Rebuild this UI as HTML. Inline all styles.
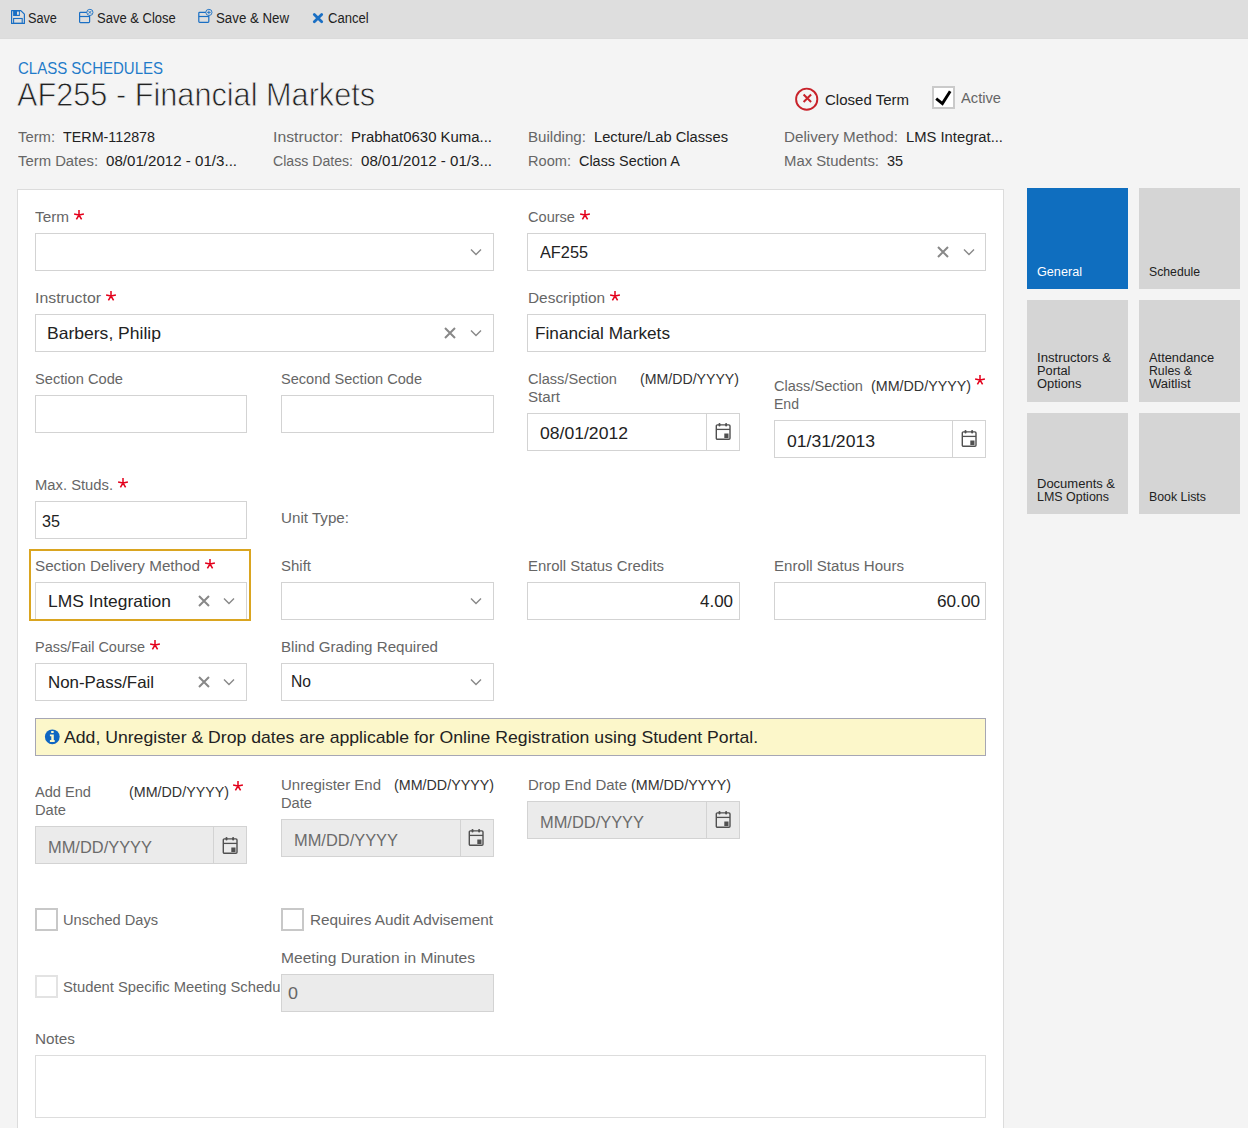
<!DOCTYPE html>
<html><head><meta charset="utf-8">
<style>
*{margin:0;padding:0;box-sizing:border-box}
html,body{width:1248px;height:1128px;overflow:hidden;background:#f4f4f4;font-family:"Liberation Sans",sans-serif;position:relative}
.a{position:absolute;white-space:nowrap;transform-origin:0 0}
svg.a{overflow:visible}
</style></head><body>
<div class="a" style="left:0;top:0;width:1248px;height:38px;background:#dedede"></div>
<div class="a" style="left:0;top:38px;width:1248px;height:1px;background:#dbdbdb"></div>
<svg class="a" style="left:11px;top:10px" width="14" height="14" viewBox="0 0 14 14"><path d="M0.6 0.6H9.8L13.4 4.2V13.4H0.6Z" fill="none" stroke="#1a6fc4" stroke-width="1.2" stroke-linejoin="round"/><rect x="2.1" y="0.6" width="6.8" height="5.4" fill="#1a6fc4"/><rect x="6" y="1.6" width="1.9" height="3.2" fill="#dedede"/><rect x="2.6" y="8.5" width="8.6" height="4.9" fill="none" stroke="#1a6fc4" stroke-width="1.1"/></svg>
<div class="a" style="left:28.00px;top:11px;font-size:14px;line-height:14px;color:#222222;transform:scaleX(0.9062);">Save</div>
<svg class="a" style="left:78px;top:7px" width="17" height="17" viewBox="0 0 17 17"><rect x="1.6" y="5.4" width="10" height="10.2" rx="0.8" fill="none" stroke="#1a6fc4" stroke-width="1.2"/><line x1="1.6" y1="9.5" x2="11.6" y2="9.5" stroke="#1a6fc4" stroke-width="1.2"/><circle cx="11.9" cy="5.4" r="3.1" fill="#dedede" stroke="#1a6fc4" stroke-width="0.9"/><path d="M10.6 4.1l2.6 2.6M13.2 4.1l-2.6 2.6" stroke="#1a6fc4" stroke-width="0.9"/></svg>
<div class="a" style="left:97.00px;top:11px;font-size:14px;line-height:14px;color:#222222;transform:scaleX(0.9294);">Save &amp; Close</div>
<svg class="a" style="left:197px;top:7px" width="17" height="17" viewBox="0 0 17 17"><rect x="1.8" y="5.4" width="10" height="10" rx="0.8" fill="none" stroke="#1a6fc4" stroke-width="1.2"/><line x1="1.8" y1="9.5" x2="11.8" y2="9.5" stroke="#1a6fc4" stroke-width="1.2"/><circle cx="11.9" cy="5.4" r="3.1" fill="#dedede" stroke="#1a6fc4" stroke-width="0.9"/><path d="M11.9 3.6v3.6M10.1 5.4h3.6" stroke="#1a6fc4" stroke-width="0.9"/></svg>
<div class="a" style="left:216.00px;top:11px;font-size:14px;line-height:14px;color:#222222;transform:scaleX(0.9487);">Save &amp; New</div>
<svg class="a" style="left:312px;top:12px" width="12" height="12" viewBox="0 0 12 12"><path d="M2.3 2.4l7.4 7.4M9.7 2.4l-7.4 7.4" stroke="#1a6fc4" stroke-width="2.8" stroke-linecap="round"/></svg>
<div class="a" style="left:328.00px;top:11px;font-size:14px;line-height:14px;color:#222222;transform:scaleX(0.9318);">Cancel</div>
<div class="a" style="left:18.00px;top:60px;font-size:16.5px;line-height:16.5px;color:#1f7bc9;transform:scaleX(0.9091);">CLASS SCHEDULES</div>
<div class="a" style="left:17.00px;top:78px;font-size:33px;line-height:33px;color:#222222;transform:scaleX(0.9299);-webkit-text-stroke:0.8px #f4f4f4;">AF255 - Financial Markets</div>
<svg class="a" style="left:795px;top:87px" width="25" height="25" viewBox="0 0 25 25"><circle cx="11.7" cy="12.2" r="10.6" fill="none" stroke="#c8222a" stroke-width="1.9"/><path d="M8.6 7.5L16.1 15M16.1 7.5L8.6 15" stroke="#c8222a" stroke-width="2"/></svg>
<div class="a" style="left:825.00px;top:92px;font-size:15.5px;line-height:15.5px;color:#222222;transform:scaleX(0.9689);">Closed Term</div>
<div class="a" style="left:932px;top:86px;width:23px;height:23px;background:#fff;border:2px solid #cacaca;"></div>
<svg class="a" style="left:933px;top:87px" width="21" height="21" viewBox="0 0 21 21"><path d="M3.2 11.6L9.4 16.6L17.2 4.2" fill="none" stroke="#000" stroke-width="2.9" stroke-linejoin="miter"/></svg>
<div class="a" style="left:961.00px;top:90px;font-size:15.5px;line-height:15.5px;color:#666666;transform:scaleX(0.9479);">Active</div>
<div class="a" style="left:18.00px;top:129px;font-size:15.5px;line-height:15.5px;color:#666666;transform:scaleX(0.9561);">Term:</div>
<div class="a" style="left:63.00px;top:129px;font-size:15.5px;line-height:15.5px;color:#222222;transform:scaleX(0.9237);">TERM-112878</div>
<div class="a" style="left:18.00px;top:153px;font-size:15.5px;line-height:15.5px;color:#666666;transform:scaleX(0.9581);">Term Dates:</div>
<div class="a" style="left:106.00px;top:153px;font-size:15.5px;line-height:15.5px;color:#222222;transform:scaleX(0.9747);">08/01/2012 - 01/3...</div>
<div class="a" style="left:273.00px;top:129px;font-size:15.5px;line-height:15.5px;color:#666666;transform:scaleX(1.0160);">Instructor:</div>
<div class="a" style="left:351.00px;top:129px;font-size:15.5px;line-height:15.5px;color:#222222;transform:scaleX(0.9625);">Prabhat0630 Kuma...</div>
<div class="a" style="left:273.00px;top:153px;font-size:15.5px;line-height:15.5px;color:#666666;transform:scaleX(0.9101);">Class Dates:</div>
<div class="a" style="left:361.00px;top:153px;font-size:15.5px;line-height:15.5px;color:#222222;transform:scaleX(0.9747);">08/01/2012 - 01/3...</div>
<div class="a" style="left:528.00px;top:129px;font-size:15.5px;line-height:15.5px;color:#666666;transform:scaleX(0.9748);">Building:</div>
<div class="a" style="left:594.00px;top:129px;font-size:15.5px;line-height:15.5px;color:#222222;transform:scaleX(0.9483);">Lecture/Lab Classes</div>
<div class="a" style="left:528.00px;top:153px;font-size:15.5px;line-height:15.5px;color:#666666;transform:scaleX(0.9409);">Room:</div>
<div class="a" style="left:579.00px;top:153px;font-size:15.5px;line-height:15.5px;color:#222222;transform:scaleX(0.9300);">Class Section A</div>
<div class="a" style="left:784.00px;top:129px;font-size:15.5px;line-height:15.5px;color:#666666;transform:scaleX(0.9802);">Delivery Method:</div>
<div class="a" style="left:906.00px;top:129px;font-size:15.5px;line-height:15.5px;color:#222222;transform:scaleX(0.9538);">LMS Integrat...</div>
<div class="a" style="left:784.00px;top:153px;font-size:15.5px;line-height:15.5px;color:#666666;transform:scaleX(0.9586);">Max Students:</div>
<div class="a" style="left:887.00px;top:153px;font-size:15.5px;line-height:15.5px;color:#222222;transform:scaleX(0.9302);">35</div>
<div class="a" style="left:1027px;top:188px;width:101px;height:101px;background:#0f6ebf"></div>
<div class="a" style="left:1037.00px;top:266px;font-size:12.5px;line-height:12.5px;color:#fff;transform:scaleX(1.0112);">General</div>
<div class="a" style="left:1139px;top:188px;width:101px;height:101px;background:#d5d5d5"></div>
<div class="a" style="left:1149.00px;top:266px;font-size:12.5px;line-height:12.5px;color:#222222;transform:scaleX(0.9789);">Schedule</div>
<div class="a" style="left:1027px;top:300px;width:101px;height:102px;background:#d5d5d5"></div>
<div class="a" style="left:1037.00px;top:352px;font-size:12.5px;line-height:12.5px;color:#222222;transform:scaleX(1.0541);">Instructors &amp;</div>
<div class="a" style="left:1037.00px;top:365px;font-size:12.5px;line-height:12.5px;color:#222222;transform:scaleX(1.0245);">Portal</div>
<div class="a" style="left:1037.00px;top:378px;font-size:12.5px;line-height:12.5px;color:#222222;transform:scaleX(1.0325);">Options</div>
<div class="a" style="left:1139px;top:300px;width:101px;height:102px;background:#d5d5d5"></div>
<div class="a" style="left:1149.00px;top:352px;font-size:12.5px;line-height:12.5px;color:#222222;transform:scaleX(1.0285);">Attendance</div>
<div class="a" style="left:1149.00px;top:365px;font-size:12.5px;line-height:12.5px;color:#222222;transform:scaleX(0.9817);">Rules &amp;</div>
<div class="a" style="left:1149.00px;top:378px;font-size:12.5px;line-height:12.5px;color:#222222;transform:scaleX(1.0427);">Waitlist</div>
<div class="a" style="left:1027px;top:413px;width:101px;height:101px;background:#d5d5d5"></div>
<div class="a" style="left:1037.00px;top:478px;font-size:12.5px;line-height:12.5px;color:#222222;transform:scaleX(1.0400);">Documents &amp;</div>
<div class="a" style="left:1037.00px;top:491px;font-size:12.5px;line-height:12.5px;color:#222222;transform:scaleX(0.9959);">LMS Options</div>
<div class="a" style="left:1139px;top:413px;width:101px;height:101px;background:#d5d5d5"></div>
<div class="a" style="left:1149.00px;top:491px;font-size:12.5px;line-height:12.5px;color:#222222;transform:scaleX(0.9879);">Book Lists</div>
<div class="a" style="left:17px;top:189px;width:987px;height:1000px;background:#fff;border:1px solid #dcdcdc"></div>
<div class="a" style="left:35.00px;top:209px;font-size:15.5px;line-height:15.5px;color:#666666;transform:scaleX(0.9884);">Term</div>
<svg class="a" style="left:73px;top:208.5px" width="12" height="12" viewBox="-6 -6 12 12"><path d="M0 0V-5M0 0L4.89 -1.04M0 0L2.6 4.4M0 0L-2.6 4.4M0 0L-4.89 -1.04" stroke="#e3001b" stroke-width="1.5" stroke-linecap="butt"/></svg>
<div class="a" style="left:35px;top:233px;width:459px;height:38px;background:#fff;border:1px solid #d3d3d3;"></div>
<svg class="a" style="left:470px;top:248px" width="12" height="8" viewBox="0 0 12 8"><path d="M1 1.5l5 5 5-5" fill="none" stroke="#888888" stroke-width="1.4"/></svg>
<div class="a" style="left:528.00px;top:209px;font-size:15.5px;line-height:15.5px;color:#666666;transform:scaleX(0.9400);">Course</div>
<svg class="a" style="left:579px;top:208.5px" width="12" height="12" viewBox="-6 -6 12 12"><path d="M0 0V-5M0 0L4.89 -1.04M0 0L2.6 4.4M0 0L-2.6 4.4M0 0L-4.89 -1.04" stroke="#e3001b" stroke-width="1.5" stroke-linecap="butt"/></svg>
<div class="a" style="left:527px;top:233px;width:459px;height:38px;background:#fff;border:1px solid #d3d3d3;"></div>
<svg class="a" style="left:937px;top:246px" width="12" height="12" viewBox="0 0 12 12"><path d="M1 1l10 10M11 1L1 11" fill="none" stroke="#888888" stroke-width="2"/></svg>
<svg class="a" style="left:963px;top:248px" width="12" height="8" viewBox="0 0 12 8"><path d="M1 1.5l5 5 5-5" fill="none" stroke="#888888" stroke-width="1.4"/></svg>
<div class="a" style="left:540.00px;top:244px;font-size:16.5px;line-height:16.5px;color:#222222;transform:scaleX(0.9877);">AF255</div>
<div class="a" style="left:35.00px;top:290px;font-size:15.5px;line-height:15.5px;color:#666666;transform:scaleX(1.0217);">Instructor</div>
<svg class="a" style="left:105px;top:289.5px" width="12" height="12" viewBox="-6 -6 12 12"><path d="M0 0V-5M0 0L4.89 -1.04M0 0L2.6 4.4M0 0L-2.6 4.4M0 0L-4.89 -1.04" stroke="#e3001b" stroke-width="1.5" stroke-linecap="butt"/></svg>
<div class="a" style="left:35px;top:314px;width:459px;height:38px;background:#fff;border:1px solid #d3d3d3;"></div>
<svg class="a" style="left:444px;top:327px" width="12" height="12" viewBox="0 0 12 12"><path d="M1 1l10 10M11 1L1 11" fill="none" stroke="#888888" stroke-width="2"/></svg>
<svg class="a" style="left:470px;top:329px" width="12" height="8" viewBox="0 0 12 8"><path d="M1 1.5l5 5 5-5" fill="none" stroke="#888888" stroke-width="1.4"/></svg>
<div class="a" style="left:47.00px;top:325px;font-size:16.5px;line-height:16.5px;color:#222222;transform:scaleX(1.0624);">Barbers, Philip</div>
<div class="a" style="left:528.00px;top:290px;font-size:15.5px;line-height:15.5px;color:#666666;transform:scaleX(0.9935);">Description</div>
<svg class="a" style="left:609px;top:289.5px" width="12" height="12" viewBox="-6 -6 12 12"><path d="M0 0V-5M0 0L4.89 -1.04M0 0L2.6 4.4M0 0L-2.6 4.4M0 0L-4.89 -1.04" stroke="#e3001b" stroke-width="1.5" stroke-linecap="butt"/></svg>
<div class="a" style="left:527px;top:314px;width:459px;height:38px;background:#fff;border:1px solid #d3d3d3;"></div>
<div class="a" style="left:535.00px;top:325px;font-size:16.5px;line-height:16.5px;color:#222222;transform:scaleX(1.0441);">Financial Markets</div>
<div class="a" style="left:35.00px;top:371px;font-size:15.5px;line-height:15.5px;color:#666666;transform:scaleX(0.9452);">Section Code</div>
<div class="a" style="left:35px;top:395px;width:212px;height:38px;background:#fff;border:1px solid #d3d3d3;"></div>
<div class="a" style="left:281.00px;top:371px;font-size:15.5px;line-height:15.5px;color:#666666;transform:scaleX(0.9406);">Second Section Code</div>
<div class="a" style="left:281px;top:395px;width:213px;height:38px;background:#fff;border:1px solid #d3d3d3;"></div>
<div class="a" style="left:528.00px;top:371px;font-size:15.5px;line-height:15.5px;color:#666666;transform:scaleX(0.9388);">Class/Section</div>
<div class="a" style="left:528.00px;top:389px;font-size:15.5px;line-height:15.5px;color:#666666;transform:scaleX(0.9786);">Start</div>
<div class="a" style="left:640.00px;top:371px;font-size:15px;line-height:15px;color:#333;transform:scaleX(0.9429);">(MM/DD/YYYY)</div>
<div class="a" style="left:527px;top:413px;width:213px;height:38px;background:#fff;border:1px solid #d3d3d3;"></div>
<div class="a" style="left:706px;top:414px;width:1px;height:36px;background:#d3d3d3"></div>
<svg class="a" style="left:715px;top:423px" width="17" height="17" viewBox="0 0 17 17"><rect x="1.3" y="1.9" width="13.7" height="14.4" rx="1.1" fill="none" stroke="#505050" stroke-width="1.4"/><line x1="1.3" y1="6.4" x2="15" y2="6.4" stroke="#505050" stroke-width="1.3"/><rect x="3.5" y="0.1" width="2" height="3.4" rx="1" fill="#505050"/><rect x="10.1" y="0.1" width="2" height="3.4" rx="1" fill="#505050"/><rect x="9.3" y="10.5" width="4.2" height="4.5" fill="#505050"/></svg>
<div class="a" style="left:540.00px;top:425px;font-size:16.5px;line-height:16.5px;color:#222222;transform:scaleX(1.0654);">08/01/2012</div>
<div class="a" style="left:774.00px;top:378px;font-size:15.5px;line-height:15.5px;color:#666666;transform:scaleX(0.9388);">Class/Section</div>
<div class="a" style="left:774.00px;top:396px;font-size:15.5px;line-height:15.5px;color:#666666;transform:scaleX(0.9058);">End</div>
<div class="a" style="left:871.00px;top:378px;font-size:15px;line-height:15px;color:#333;transform:scaleX(0.9524);">(MM/DD/YYYY)</div>
<svg class="a" style="left:974px;top:374px" width="12" height="12" viewBox="-6 -6 12 12"><path d="M0 0V-5M0 0L4.89 -1.04M0 0L2.6 4.4M0 0L-2.6 4.4M0 0L-4.89 -1.04" stroke="#e3001b" stroke-width="1.5" stroke-linecap="butt"/></svg>
<div class="a" style="left:774px;top:420px;width:212px;height:38px;background:#fff;border:1px solid #d3d3d3;"></div>
<div class="a" style="left:952px;top:421px;width:1px;height:36px;background:#d3d3d3"></div>
<svg class="a" style="left:961px;top:430px" width="17" height="17" viewBox="0 0 17 17"><rect x="1.3" y="1.9" width="13.7" height="14.4" rx="1.1" fill="none" stroke="#505050" stroke-width="1.4"/><line x1="1.3" y1="6.4" x2="15" y2="6.4" stroke="#505050" stroke-width="1.3"/><rect x="3.5" y="0.1" width="2" height="3.4" rx="1" fill="#505050"/><rect x="10.1" y="0.1" width="2" height="3.4" rx="1" fill="#505050"/><rect x="9.3" y="10.5" width="4.2" height="4.5" fill="#505050"/></svg>
<div class="a" style="left:787.00px;top:433px;font-size:16.5px;line-height:16.5px;color:#222222;transform:scaleX(1.0654);">01/31/2013</div>
<div class="a" style="left:35.00px;top:477px;font-size:15.5px;line-height:15.5px;color:#666666;transform:scaleX(0.9535);">Max. Studs.</div>
<svg class="a" style="left:117px;top:476.5px" width="12" height="12" viewBox="-6 -6 12 12"><path d="M0 0V-5M0 0L4.89 -1.04M0 0L2.6 4.4M0 0L-2.6 4.4M0 0L-4.89 -1.04" stroke="#e3001b" stroke-width="1.5" stroke-linecap="butt"/></svg>
<div class="a" style="left:35px;top:501px;width:212px;height:38px;background:#fff;border:1px solid #d3d3d3;"></div>
<div class="a" style="left:42.00px;top:513px;font-size:16.5px;line-height:16.5px;color:#222222;transform:scaleX(0.9783);">35</div>
<div class="a" style="left:281.00px;top:510px;font-size:15.5px;line-height:15.5px;color:#666666;transform:scaleX(0.9784);">Unit Type:</div>
<div class="a" style="left:35.00px;top:558px;font-size:15.5px;line-height:15.5px;color:#666666;transform:scaleX(0.9821);">Section Delivery Method</div>
<svg class="a" style="left:204px;top:557.5px" width="12" height="12" viewBox="-6 -6 12 12"><path d="M0 0V-5M0 0L4.89 -1.04M0 0L2.6 4.4M0 0L-2.6 4.4M0 0L-4.89 -1.04" stroke="#e3001b" stroke-width="1.5" stroke-linecap="butt"/></svg>
<div class="a" style="left:35px;top:582px;width:212px;height:38px;background:#fff;border:1px solid #d3d3d3;"></div>
<svg class="a" style="left:198px;top:595px" width="12" height="12" viewBox="0 0 12 12"><path d="M1 1l10 10M11 1L1 11" fill="none" stroke="#888888" stroke-width="2"/></svg>
<svg class="a" style="left:223px;top:597px" width="12" height="8" viewBox="0 0 12 8"><path d="M1 1.5l5 5 5-5" fill="none" stroke="#888888" stroke-width="1.4"/></svg>
<div class="a" style="left:47.50px;top:593px;font-size:16.5px;line-height:16.5px;color:#222222;transform:scaleX(1.0558);">LMS Integration</div>
<div class="a" style="left:29px;top:549px;width:222px;height:72px;border:2px solid #daa520"></div>
<div class="a" style="left:281.00px;top:558px;font-size:15.5px;line-height:15.5px;color:#666666;transform:scaleX(0.9677);">Shift</div>
<div class="a" style="left:281px;top:582px;width:213px;height:38px;background:#fff;border:1px solid #d3d3d3;"></div>
<svg class="a" style="left:470px;top:597px" width="12" height="8" viewBox="0 0 12 8"><path d="M1 1.5l5 5 5-5" fill="none" stroke="#888888" stroke-width="1.4"/></svg>
<div class="a" style="left:528.00px;top:558px;font-size:15.5px;line-height:15.5px;color:#666666;transform:scaleX(0.9625);">Enroll Status Credits</div>
<div class="a" style="left:527px;top:582px;width:213px;height:38px;background:#fff;border:1px solid #d3d3d3;"></div>
<div class="a" style="left:700.00px;top:593px;font-size:16.5px;line-height:16.5px;color:#222222;transform:scaleX(1.0280);">4.00</div>
<div class="a" style="left:774.00px;top:558px;font-size:15.5px;line-height:15.5px;color:#666666;transform:scaleX(0.9738);">Enroll Status Hours</div>
<div class="a" style="left:774px;top:582px;width:212px;height:38px;background:#fff;border:1px solid #d3d3d3;"></div>
<div class="a" style="left:937.00px;top:593px;font-size:16.5px;line-height:16.5px;color:#222222;transform:scaleX(1.0412);">60.00</div>
<div class="a" style="left:35.00px;top:639px;font-size:15.5px;line-height:15.5px;color:#666666;transform:scaleX(0.9322);">Pass/Fail Course</div>
<svg class="a" style="left:149px;top:638.5px" width="12" height="12" viewBox="-6 -6 12 12"><path d="M0 0V-5M0 0L4.89 -1.04M0 0L2.6 4.4M0 0L-2.6 4.4M0 0L-4.89 -1.04" stroke="#e3001b" stroke-width="1.5" stroke-linecap="butt"/></svg>
<div class="a" style="left:35px;top:663px;width:212px;height:38px;background:#fff;border:1px solid #d3d3d3;"></div>
<svg class="a" style="left:198px;top:676px" width="12" height="12" viewBox="0 0 12 12"><path d="M1 1l10 10M11 1L1 11" fill="none" stroke="#888888" stroke-width="2"/></svg>
<svg class="a" style="left:223px;top:678px" width="12" height="8" viewBox="0 0 12 8"><path d="M1 1.5l5 5 5-5" fill="none" stroke="#888888" stroke-width="1.4"/></svg>
<div class="a" style="left:47.50px;top:674px;font-size:16.5px;line-height:16.5px;color:#222222;transform:scaleX(1.0232);">Non-Pass/Fail</div>
<div class="a" style="left:281.00px;top:639px;font-size:15.5px;line-height:15.5px;color:#666666;transform:scaleX(0.9745);">Blind Grading Required</div>
<div class="a" style="left:281px;top:663px;width:213px;height:38px;background:#fff;border:1px solid #d3d3d3;"></div>
<svg class="a" style="left:470px;top:678px" width="12" height="8" viewBox="0 0 12 8"><path d="M1 1.5l5 5 5-5" fill="none" stroke="#888888" stroke-width="1.4"/></svg>
<div class="a" style="left:291.00px;top:673px;font-size:16.5px;line-height:16.5px;color:#222222;transform:scaleX(0.9479);">No</div>
<div class="a" style="left:35px;top:718px;width:951px;height:38px;background:#fcf7ca;border:1px solid #a6a6b4;"></div>
<svg class="a" style="left:45px;top:730px" width="15" height="15" viewBox="0 0 15 15"><circle cx="7.3" cy="6.8" r="7.4" fill="#0f66c2"/><rect x="6" y="0.9" width="2.8" height="2.1" rx="0.8" fill="#fcf7ca"/><path d="M4.9 4.5H8.8V10.1H9.7V11.9H4.9V10.1H6.3V6.3H4.9Z" fill="#fcf7ca"/></svg>
<div class="a" style="left:64.00px;top:729px;font-size:17px;line-height:17px;color:#222222;transform:scaleX(1.0374);">Add, Unregister &amp; Drop dates are applicable for Online Registration using Student Portal.</div>
<div class="a" style="left:35.00px;top:784px;font-size:15.5px;line-height:15.5px;color:#666666;transform:scaleX(0.9412);">Add End</div>
<div class="a" style="left:35.00px;top:802px;font-size:15.5px;line-height:15.5px;color:#666666;transform:scaleX(0.9480);">Date</div>
<div class="a" style="left:129.00px;top:784px;font-size:15px;line-height:15px;color:#333;transform:scaleX(0.9524);">(MM/DD/YYYY)</div>
<svg class="a" style="left:232px;top:779.5px" width="12" height="12" viewBox="-6 -6 12 12"><path d="M0 0V-5M0 0L4.89 -1.04M0 0L2.6 4.4M0 0L-2.6 4.4M0 0L-4.89 -1.04" stroke="#e3001b" stroke-width="1.5" stroke-linecap="butt"/></svg>
<div class="a" style="left:35px;top:826px;width:212px;height:38px;background:#ebebeb;border:1px solid #d3d3d3;"></div>
<div class="a" style="left:213px;top:827px;width:1px;height:36px;background:#d3d3d3"></div>
<svg class="a" style="left:222px;top:837px" width="17" height="17" viewBox="0 0 17 17"><rect x="1.3" y="1.9" width="13.7" height="14.4" rx="1.1" fill="none" stroke="#505050" stroke-width="1.4"/><line x1="1.3" y1="6.4" x2="15" y2="6.4" stroke="#505050" stroke-width="1.3"/><rect x="3.5" y="0.1" width="2" height="3.4" rx="1" fill="#505050"/><rect x="10.1" y="0.1" width="2" height="3.4" rx="1" fill="#505050"/><rect x="9.3" y="10.5" width="4.2" height="4.5" fill="#505050"/></svg>
<div class="a" style="left:47.50px;top:839px;font-size:16.5px;line-height:16.5px;color:#6b6b6b;transform:scaleX(0.9952);">MM/DD/YYYY</div>
<div class="a" style="left:281.00px;top:777px;font-size:15.5px;line-height:15.5px;color:#666666;transform:scaleX(0.9671);">Unregister End</div>
<div class="a" style="left:281.00px;top:795px;font-size:15.5px;line-height:15.5px;color:#666666;transform:scaleX(0.9480);">Date</div>
<div class="a" style="left:394.00px;top:777px;font-size:15px;line-height:15px;color:#333;transform:scaleX(0.9524);">(MM/DD/YYYY)</div>
<div class="a" style="left:281px;top:819px;width:213px;height:38px;background:#ebebeb;border:1px solid #d3d3d3;"></div>
<div class="a" style="left:460px;top:820px;width:1px;height:36px;background:#d3d3d3"></div>
<svg class="a" style="left:468px;top:829px" width="17" height="17" viewBox="0 0 17 17"><rect x="1.3" y="1.9" width="13.7" height="14.4" rx="1.1" fill="none" stroke="#505050" stroke-width="1.4"/><line x1="1.3" y1="6.4" x2="15" y2="6.4" stroke="#505050" stroke-width="1.3"/><rect x="3.5" y="0.1" width="2" height="3.4" rx="1" fill="#505050"/><rect x="10.1" y="0.1" width="2" height="3.4" rx="1" fill="#505050"/><rect x="9.3" y="10.5" width="4.2" height="4.5" fill="#505050"/></svg>
<div class="a" style="left:294.00px;top:832px;font-size:16.5px;line-height:16.5px;color:#6b6b6b;transform:scaleX(0.9952);">MM/DD/YYYY</div>
<div class="a" style="left:528.00px;top:777px;font-size:15.5px;line-height:15.5px;color:#666666;transform:scaleX(0.9659);">Drop End Date</div>
<div class="a" style="left:631.00px;top:777px;font-size:15px;line-height:15px;color:#333;transform:scaleX(0.9524);">(MM/DD/YYYY)</div>
<div class="a" style="left:527px;top:801px;width:213px;height:38px;background:#ebebeb;border:1px solid #d3d3d3;"></div>
<div class="a" style="left:706px;top:802px;width:1px;height:36px;background:#d3d3d3"></div>
<svg class="a" style="left:715px;top:811px" width="17" height="17" viewBox="0 0 17 17"><rect x="1.3" y="1.9" width="13.7" height="14.4" rx="1.1" fill="none" stroke="#505050" stroke-width="1.4"/><line x1="1.3" y1="6.4" x2="15" y2="6.4" stroke="#505050" stroke-width="1.3"/><rect x="3.5" y="0.1" width="2" height="3.4" rx="1" fill="#505050"/><rect x="10.1" y="0.1" width="2" height="3.4" rx="1" fill="#505050"/><rect x="9.3" y="10.5" width="4.2" height="4.5" fill="#505050"/></svg>
<div class="a" style="left:540.00px;top:814px;font-size:16.5px;line-height:16.5px;color:#6b6b6b;transform:scaleX(0.9952);">MM/DD/YYYY</div>
<div class="a" style="left:35px;top:908px;width:23px;height:23px;background:#fff;border:2px solid #c8c8c8;"></div>
<div class="a" style="left:63.00px;top:912px;font-size:15.5px;line-height:15.5px;color:#666666;transform:scaleX(0.9425);">Unsched Days</div>
<div class="a" style="left:281px;top:908px;width:23px;height:23px;background:#fff;border:2px solid #c8c8c8;"></div>
<div class="a" style="left:310.00px;top:912px;font-size:15.5px;line-height:15.5px;color:#666666;transform:scaleX(0.9881);">Requires Audit Advisement</div>
<div class="a" style="left:281.00px;top:950px;font-size:15.5px;line-height:15.5px;color:#666666;transform:scaleX(1.0052);">Meeting Duration in Minutes</div>
<div class="a" style="left:281px;top:974px;width:213px;height:38px;background:#ebebeb;border:1px solid #d3d3d3;"></div>
<div class="a" style="left:288.00px;top:985px;font-size:16.5px;line-height:16.5px;color:#666;transform:scaleX(1.0870);">0</div>
<div class="a" style="left:35px;top:975px;width:23px;height:23px;background:#fff;border:2px solid #e3e3e3;"></div>
<div class="a" style="left:63px;top:960px;width:218px;height:50px;overflow:hidden">
<div class="a" style="left:0.30px;top:19px;font-size:15.5px;line-height:15.5px;color:#666666;transform:scaleX(0.9527);">Student Specific Meeting Schedu</div>
</div>
<div class="a" style="left:35.00px;top:1031px;font-size:15.5px;line-height:15.5px;color:#666666;transform:scaleX(0.9877);">Notes</div>
<div class="a" style="left:35px;top:1055px;width:951px;height:63px;background:#fff;border:1px solid #dddddd;"></div>
</body></html>
